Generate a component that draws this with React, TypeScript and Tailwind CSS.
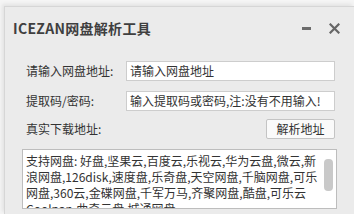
const font = "font-['Microsoft_YaHei','Noto_Sans_CJK_SC',sans-serif]";

const lines = [
  "支持网盘: 好盘,坚果云,百度云,乐视云,华为云盘,微云,新",
  "浪网盘,126disk,速度盘,乐奇盘,天空网盘,千脑网盘,可乐",
  "网盘,360云,金碟网盘,千军万马,齐聚网盘,酷盘,可乐云",
  "Coolpan,曲奇云盘,城通网盘,",
];

function Field({ label, value }: { label: string; value: string }) {
  return (
    <div className="flex items-center h-5">
      <span className="w-[100px] text-[12px] text-[#333]">{label}</span>
      <div className="w-[209px] h-5 bg-white border border-[#cdcdcd] flex items-center pl-[3px] text-[12px] text-[#333] whitespace-nowrap overflow-hidden">
        {value}
      </div>
    </div>
  );
}

export default function App() {
  return (
    <div className={`w-[354px] h-[214px] bg-[#f5f5f5] overflow-hidden ${font}`}>
      <div className="ml-[4px] mt-[6px] h-[208px] bg-[#ebebeb] border-l border-t border-[#d6d6d6] shadow-[-2px_-2px_4px_rgba(0,0,0,0.08)] flex flex-col">
        <div className="h-[42px] flex items-center pl-[8px] pr-[14px]">
          <span className="text-[14px] font-bold text-[#3f3f3f] tracking-[0.3px] pt-[1px]">ICEZAN网盘解析工具</span>
          <div className="ml-auto flex items-center gap-[18px] pt-[1px]">
            <div className="w-[9px] h-[3px] bg-[#6b6b6b]" />
            <svg width="11" height="11" viewBox="0 0 11 11">
              <path d="M1.5 1.5 L9.5 9.5 M9.5 1.5 L1.5 9.5" stroke="#666" strokeWidth="2.2" strokeLinecap="square" />
            </svg>
          </div>
        </div>
        <div className="flex flex-col pl-[21px] pt-[12px] gap-[10px]">
          <Field label="请输入网盘地址:" value="请输入网盘地址" />
          <Field label="提取码/密码:" value="输入提取码或密码,注:没有不用输入!" />
        </div>
        <div className="flex items-center pl-[21px] mt-[8px] h-5">
          <span className="text-[12px] text-[#333]">真实下载地址:</span>
          <button className="ml-auto mr-[19px] w-[69px] h-5 bg-[#fafafa] border border-[#c4c4c4] rounded-[2px] text-[12px] text-[#333] flex items-center justify-center">
            解析地址
          </button>
        </div>
        <div className="relative ml-[17px] mt-[10px] w-[315px] h-[60px] bg-white border border-[#bdbdbd] overflow-hidden pl-[3px] pt-[3px]">
          {lines.map((l) => (
            <div key={l} className="h-4 leading-4 text-[12px] text-[#333] whitespace-nowrap">{l}</div>
          ))}
          <div className="absolute right-[3px] top-[9px] w-[9px] h-[32px] rounded-[4px] bg-[#c9c9c9]" />
        </div>
      </div>
    </div>
  );
}
